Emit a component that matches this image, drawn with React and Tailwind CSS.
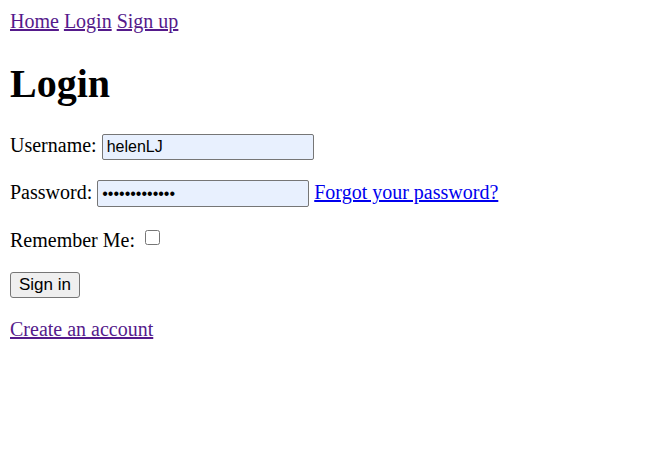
export default function App() {
    return (
        <div className="min-h-screen bg-white p-[10px] font-['Liberation_Serif','Times_New_Roman',serif] text-[20px] leading-[normal] text-black">
            {/* nav links */}
            <div>
                <a href="#" className="text-[#551a8b] underline">Home</a>{" "}
                <a href="#" className="text-[#551a8b] underline">Login</a>{" "}
                <a href="#" className="text-[#551a8b] underline">Sign up</a>
            </div>

            <h1 className="my-[27px] text-[40px] font-bold leading-[normal]">Login</h1>

            <form>
                <p className="my-[20px]">
                    Username:{" "}
                    <input
                        type="text"
                        defaultValue="helenLJ"
                        className="h-[26px] w-[212px] rounded-[2px] border border-[#767676] bg-[#e8f0fe] px-[4px] align-baseline font-['Liberation_Sans',Arial,sans-serif] text-[16px] text-black outline-none"
                    />
                </p>
                <p className="my-[20px]">
                    Password:{" "}
                    <input
                        type="password"
                        defaultValue="helenpassword"
                        className="h-[27px] w-[212px] rounded-[2px] border border-[#767676] bg-[#e8f0fe] px-[4px] align-baseline font-['Liberation_Sans',Arial,sans-serif] text-[16px] text-black outline-none"
                    />{" "}
                    <a href="#" className="text-[#0000ee] underline">Forgot your password?</a>
                </p>
                <p className="my-[20px] pt-[2px]">
                    Remember Me:{" "}
                    <input type="checkbox" className="ml-[5px] h-[15px] w-[15px] align-[2px]" />
                </p>
                <p className="my-[20px]">
                    <button
                        type="button"
                        className="h-[26px] w-[70px] rounded-[3px] border border-[#767676] bg-[#efefef] font-['Liberation_Sans',Arial,sans-serif] text-[17px] text-black"
                    >
                        Sign in
                    </button>
                </p>
            </form>

            <a href="#" className="text-[#551a8b] underline">Create an account</a>
        </div>
    );
}
